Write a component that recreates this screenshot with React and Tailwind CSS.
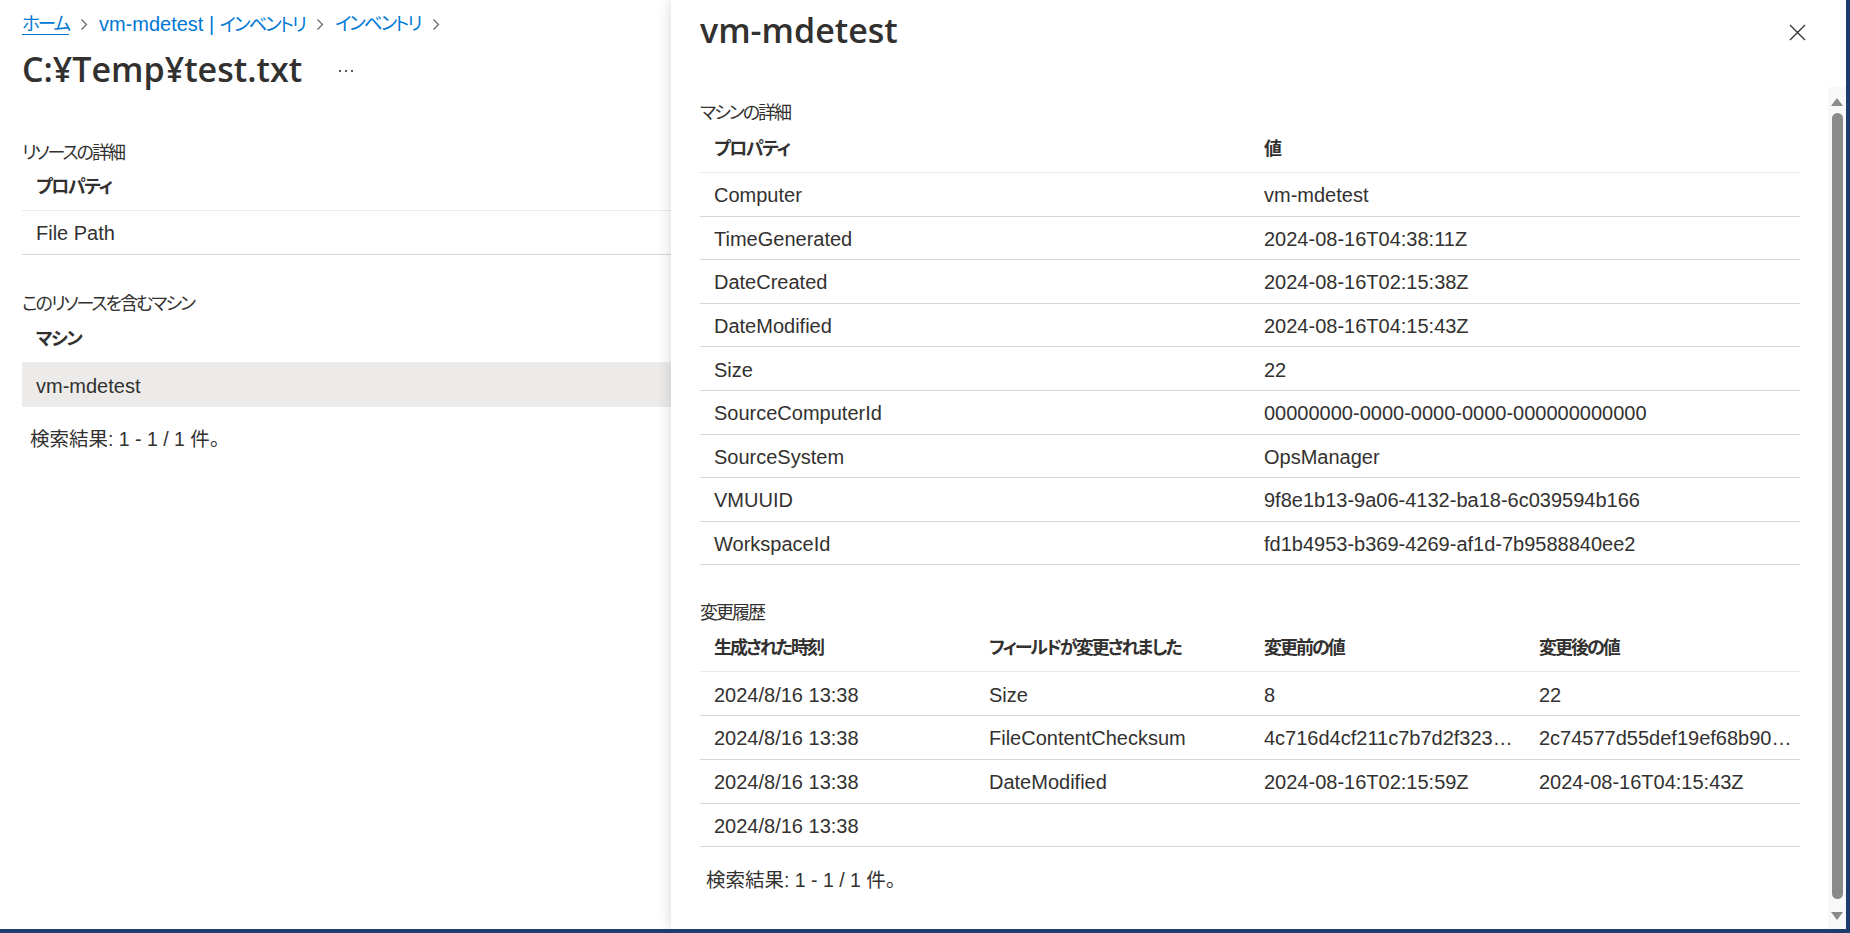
import React from 'react'

const MACHINE = [
  ['Computer', 'vm-mdetest'],
  ['TimeGenerated', '2024-08-16T04:38:11Z'],
  ['DateCreated', '2024-08-16T02:15:38Z'],
  ['DateModified', '2024-08-16T04:15:43Z'],
  ['Size', '22'],
  ['SourceComputerId', '00000000-0000-0000-0000-000000000000'],
  ['SourceSystem', 'OpsManager'],
  ['VMUUID', '9f8e1b13-9a06-4132-ba18-6c039594b166'],
  ['WorkspaceId', 'fd1b4953-b369-4269-af1d-7b9588840ee2'],
]

const HISTORY = [
  ['2024/8/16 13:38', 'Size', '8', '22'],
  ['2024/8/16 13:38', 'FileContentChecksum', '4c716d4cf211c7b7d2f3233c941771ad0507ea5bacf93b49', '2c74577d55def19ef68b901a7f3c0d2e61b4c95a18e7'],
  ['2024/8/16 13:38', 'DateModified', '2024-08-16T02:15:59Z', '2024-08-16T04:15:43Z'],
  ['2024/8/16 13:38', '', '', ''],
]

function Chevron() {
  return (
    <svg width="8" height="13" viewBox="0 0 8 13" className="mx-[11px] shrink-0">
      <path d="M1.5 1.5 L6.5 6.5 L1.5 11.5" fill="none" stroke="#605e5c" strokeWidth="1.1" />
    </svg>
  )
}

function CloseIcon() {
  return (
    <svg width="17" height="17" viewBox="0 0 17 17">
      <path d="M1 1 L16 16 M16 1 L1 16" stroke="#323130" strokeWidth="1.3" />
    </svg>
  )
}

function MoreIcon() {
  return (
    <svg width="16" height="4" viewBox="0 0 16 4">
      <circle cx="2" cy="2" r="1.1" fill="#323130" />
      <circle cx="8" cy="2" r="1.1" fill="#323130" />
      <circle cx="14" cy="2" r="1.1" fill="#323130" />
    </svg>
  )
}

function Label({ children }) {
  return <div className="h-[24px] text-[18px] leading-[24px] tracking-[-2px]">{children}</div>
}

function Result({ className }) {
  return <div className={`h-[24px] text-[19.5px] leading-[24px] ${className}`}>検索結果: 1 - 1 / 1 件。</div>
}

const title = "[font-family:'Open_Sans','Liberation_Sans',sans-serif] text-[34px] font-semibold leading-[48px]"
const kana = 'text-[18.5px] tracking-[-2px]'

export default function App() {
  return (
    <div className="relative h-[933px] w-[1850px] overflow-hidden border-r-[4px] border-b-[4px] border-[#1e3c6c] bg-white text-[#323130] [font-family:'Liberation_Sans','Noto_Sans_CJK_JP',sans-serif] [font-feature-settings:'palt']">
      {/* Left page */}
      <div className="flex flex-col px-[22px] pt-[2px]">
        <div className="flex h-[44px] items-center text-[20px] text-[#0078d4]">
          <span className={`${kana} underline underline-offset-[4px]`}>ホーム</span>
          <Chevron />
          <span>vm-mdetest | <span className={kana}>インベントリ</span></span>
          <Chevron />
          <span className={kana}>インベントリ</span>
          <Chevron />
        </div>
        <div className="flex h-[50px] items-center pb-[4px]">
          <h1 className={title}>C:¥Temp¥test.txt</h1>
          <div className="ml-[36px] mt-[4px]"><MoreIcon /></div>
        </div>

        <div className="mt-[45px]"><Label>リソースの詳細</Label></div>
        <div className="flex h-[46px] items-center border-b border-[#edebe9] px-[14px] text-[18px] font-bold tracking-[-1.5px]">プロパティ</div>
        <div className="flex h-[44px] items-center border-b border-[#d6d6d6] px-[14px] text-[20px]">File Path</div>

        <div className="mt-[37px]"><Label>このリソースを含むマシン</Label></div>
        <div className="flex h-[46px] items-center px-[14px] text-[18px] font-bold tracking-[-1.5px]">マシン</div>
        <div className="flex h-[45px] items-center bg-[#edebe9] px-[14px] pt-[2px] text-[20px]">vm-mdetest</div>
        <Result className="mt-[20px] pl-[8px]" />
      </div>

      {/* Context pane */}
      <div className="absolute left-[671px] top-0 bottom-0 right-0 flex flex-col bg-white shadow-[0_0_14px_rgba(0,0,0,0.16)]">
        <div className="flex h-[87px] shrink-0 items-start justify-between pl-[29px] pr-[40px]">
          <h2 className={`mt-[6px] ${title}`}>vm-mdetest</h2>
          <button className="mt-[24px]"><CloseIcon /></button>
        </div>

        <div className="flex min-h-0 flex-1">
          <div className="flex-1 pl-[29px] pr-[28px]">
            <div className="mt-[14px]"><Label>マシンの詳細</Label></div>
            <div className="mt-[2px] grid h-[46px] grid-cols-2 items-center border-b border-[#edebe9] text-[18px] font-bold tracking-[-1.5px]">
              <div className="px-[14px]">プロパティ</div>
              <div className="px-[14px]">値</div>
            </div>
            {MACHINE.map(([k, v]) => (
              <div key={k} className="grid h-[43.6px] grid-cols-2 items-center border-b border-[#d6d6d6] pt-[2px] text-[20px]">
                <div className="truncate px-[14px]">{k}</div>
                <div className="truncate px-[14px]">{v}</div>
              </div>
            ))}

            <div className="mt-[36px]"><Label>変更履歴</Label></div>
            <div className="mt-[1px] grid h-[46px] grid-cols-4 items-center border-b border-[#edebe9] text-[18px] font-bold tracking-[-2px]">
              <div className="px-[14px]">生成された時刻</div>
              <div className="px-[14px]">フィールドが変更されました</div>
              <div className="px-[14px]">変更前の値</div>
              <div className="px-[14px]">変更後の値</div>
            </div>
            {HISTORY.map((r, i) => (
              <div key={i} className="grid h-[43.75px] grid-cols-4 items-center border-b border-[#d6d6d6] pt-[2px] text-[20px]">
                {r.map((c, j) => (
                  <div key={j} className="truncate pl-[14px] pr-[4px]">{c}</div>
                ))}
              </div>
            ))}
            <Result className="mt-[21px] pl-[6px]" />
          </div>

          {/* scrollbar */}
          <div className="flex w-[18px] shrink-0 flex-col items-center bg-[#f8f8f8]">
            <svg width="12" height="8" viewBox="0 0 12 8" className="mt-[11px]">
              <path d="M6 0 L12 8 L0 8 Z" fill="#8a8a8a" />
            </svg>
            <div className="mt-[7px] w-[11px] flex-1 rounded-full bg-[#8a8a8a]" />
            <svg width="12" height="8" viewBox="0 0 12 8" className="mb-[9px] mt-[13px]">
              <path d="M0 0 L12 0 L6 8 Z" fill="#8a8a8a" />
            </svg>
          </div>
        </div>
      </div>
    </div>
  )
}
